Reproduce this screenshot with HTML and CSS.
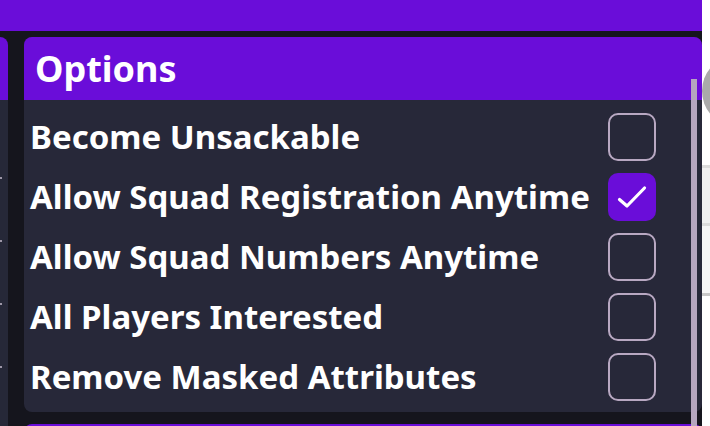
FILE: index.html
```html
<!DOCTYPE html>
<html>
<head>
<meta charset="utf-8">
<link rel="stylesheet" href="styles.css">
</head>
<body>
<div class="page">
  <div class="main">
    <div class="topbar"></div>
    <div class="content">
      <div class="side-panel">
        <div class="side-head"></div>
        <div class="side-body">
          <span class="dot d1"></span>
          <span class="dot"></span>
          <span class="dot"></span>
          <span class="dot"></span>
        </div>
      </div>
      <div class="column">
        <section class="panel">
          <header class="panel-head">Options</header>
          <ul class="options">
            <li class="option"><span class="label">Become Unsackable</span><span class="box"></span></li>
            <li class="option"><span class="label">Allow Squad Registration Anytime</span><span class="box checked"><svg viewBox="0 0 48 48" width="48" height="48"><polyline points="11.5,26.5 19,33 36.5,15" fill="none" stroke="#fff" stroke-width="3.2" stroke-linecap="round" stroke-linejoin="round"/></svg></span></li>
            <li class="option"><span class="label">Allow Squad Numbers Anytime</span><span class="box"></span></li>
            <li class="option"><span class="label">All Players Interested</span><span class="box"></span></li>
            <li class="option"><span class="label">Remove Masked Attributes</span><span class="box"></span></li>
          </ul>
        </section>
        <section class="panel next"><header class="panel-head thin"></header></section>
        <div class="scrollbar"></div>
      </div>
    </div>
  </div>
  <div class="edge">
    <div class="circle"></div>
    <div class="band b1"></div>
    <div class="band b2"></div>
  </div>
</div>
</body>
</html>
```
FILE: styles.css
```css
html, body {
  margin: 0;
  padding: 0;
  background: #ffffff;
  overflow: hidden;
}
.page {
  display: flex;
  width: 710px;
  height: 426px;
  overflow: hidden;
}
.main {
  width: 702px;
  flex: none;
  background: #15151d;
  display: flex;
  flex-direction: column;
}
.topbar {
  height: 31px;
  background: #6a0dd9;
  flex: none;
}
.content {
  display: flex;
  gap: 16px;
  margin-top: 6px;
  flex: 1;
}
.side-panel {
  width: 8px;
  flex: none;
  display: flex;
  flex-direction: column;
  border-top-right-radius: 8px;
  overflow: hidden;
}
.side-head {
  height: 63px;
  background: #6a0dd9;
}
.side-body {
  flex: 1;
  background: #262838;
  display: flex;
  flex-direction: column;
  gap: 61px;
}
.dot {
  display: block;
  width: 2px;
  height: 2px;
  background: #9d97a8;
}
.d1 { margin-top: 77px; }
.column {
  flex: 1;
  position: relative;
  display: flex;
  flex-direction: column;
  gap: 12px;
}
.panel {
  background: #272839;
  border-radius: 8px;
  overflow: hidden;
}
.panel-head {
  height: 63px;
  background: #6a0dd9;
  color: #ffffff;
  font-family: "Noto Sans", "Open Sans", sans-serif;
  font-weight: 700;
  font-size: 36px;
  line-height: 63px;
  padding-left: 11px;
  box-sizing: border-box;
}
.panel-head.thin { height: 20px; }
.options {
  list-style: none;
  margin: 0;
  padding: 7px 0 5px 0;
}
.option {
  height: 60px;
  display: flex;
  align-items: center;
  justify-content: space-between;
  padding: 0 46px 0 6px;
}
.label {
  color: #ffffff;
  font-family: "Noto Sans", "Open Sans", sans-serif;
  font-weight: 700;
  font-size: 33px;
  line-height: 40px;
  white-space: nowrap;
}
.box {
  width: 48px;
  height: 48px;
  box-sizing: border-box;
  border: 2.7px solid #b8a8c2;
  border-radius: 10px;
  flex: none;
  display: block;
}
.box.checked {
  border: none;
  background: #6a0dd9;
}
.box svg { display: block; }
.scrollbar {
  position: absolute;
  right: 5px;
  top: 42px;
  bottom: -20px;
  width: 6px;
  background: #b5a6bf;
}
.edge {
  flex: 1;
  display: flex;
  flex-direction: column;
  background: #ffffff;
}
.circle {
  margin-top: 58px;
  width: 60px;
  height: 66px;
  border-radius: 50%;
  background: #aaaaaa;
}
.band {
  border-top: 3px solid #dcdcdc;
}
.b1 {
  margin-top: 41px;
  height: 55px;
  background: #f0f0f0;
}
.b2 {
  height: 67px;
  background: #f6f6f6;
  border-bottom: 3px solid #c8c8c8;
}
```
